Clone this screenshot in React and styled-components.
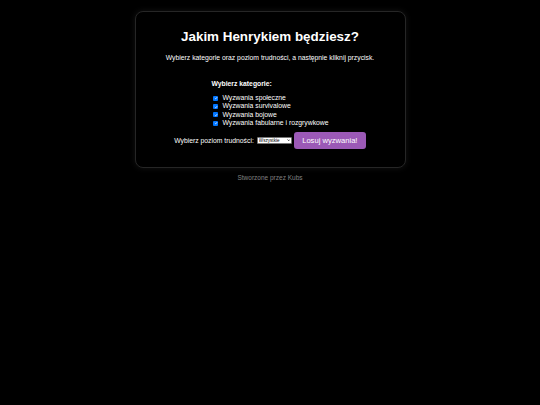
import { useState } from "react";
import styled, { createGlobalStyle } from "styled-components";

const GlobalStyle = createGlobalStyle`
  html, body {
    margin: 0;
    padding: 0;
    background: #000;
  }
  body {
    font-family: "Liberation Sans", Arial, sans-serif;
    color: #fff;
  }
`;

const Page = styled.div`
  display: flex;
  flex-direction: column;
  align-items: center;
  padding-top: 11px;
`;

const Panel = styled.div`
  box-sizing: border-box;
  width: 271px;
  padding: 16px 10px 18px;
  background: #000;
  border: 1px solid #262626;
  border-radius: 8px;
  box-shadow: 0 0 6px rgba(255, 255, 255, 0.08);
  text-align: center;
`;

const Title = styled.h1`
  margin: 0;
  font-size: 13.4px;
  line-height: 17px;
  font-weight: 700;
`;

const Intro = styled.p`
  margin: 8px 0 0;
  font-size: 6.8px;
  line-height: 9px;
`;

const Categories = styled.div`
  display: inline-block;
  margin-top: 17px;
  text-align: left;
`;

const SectionTitle = styled.h3`
  margin: 0 0 6px;
  font-size: 6.8px;
  line-height: 9px;
  font-weight: 700;
`;

const CheckRow = styled.label`
  display: flex;
  align-items: center;
  gap: 4px;
  height: 8.4px;
  padding-left: 2px;
  font-size: 6.8px;
  line-height: 8.4px;
  cursor: pointer;
`;

const HiddenInput = styled.input`
  position: absolute;
  opacity: 0;
  width: 0;
  height: 0;
  margin: 0;
`;

const Box = styled.span`
  display: flex;
  align-items: center;
  justify-content: center;
  flex: none;
  box-sizing: border-box;
  width: 5px;
  height: 5px;
  border-radius: 1px;
  background: ${(p) => (p.$on ? "#0075ff" : "#fff")};
  border: ${(p) => (p.$on ? "none" : "0.5px solid #767676")};

  svg {
    width: 4px;
    height: 4px;
  }
`;

const ControlRow = styled.div`
  display: flex;
  justify-content: center;
  align-items: center;
  gap: 2px;
  margin-top: 2.2px;
  font-size: 6.8px;
`;

const SelectWrap = styled.span`
  position: relative;
  display: inline-flex;
  margin-left: 1px;

  svg {
    position: absolute;
    right: 1.5px;
    top: 50%;
    width: 3.5px;
    height: 3.5px;
    transform: translateY(-50%);
    pointer-events: none;
  }
`;

const Select = styled.select`
  appearance: none;
  box-sizing: border-box;
  width: 35px;
  height: 7px;
  padding: 0 5px 0 1px;
  margin: 0;
  font-size: 4.6px;
  line-height: 5px;
  font-family: "Liberation Sans", Arial, sans-serif;
  color: #000;
  background: #fff;
  border: 0.5px solid #767676;
  border-radius: 1px;
  outline: none;
`;

const DrawButton = styled.button`
  width: 72px;
  height: 17.4px;
  padding: 0;
  border: none;
  border-radius: 3px;
  background: #9b59b6;
  color: #fff;
  font-family: "Liberation Sans", Arial, sans-serif;
  font-size: 7.6px;
  cursor: pointer;
`;

const Footer = styled.footer`
  margin-top: 6px;
  font-size: 6.5px;
  line-height: 8px;
  color: #808080;
`;

const categories = [
  "Wyzwania społeczne",
  "Wyzwania survivalowe",
  "Wyzwania bojowe",
  "Wyzwania fabularne i rozgrywkowe",
];

export default function App() {
  const [checked, setChecked] = useState(categories.map(() => true));
  const [level, setLevel] = useState("all");

  const toggle = (i) => {
    setChecked(checked.map((c, idx) => (idx === i ? !c : c)));
  };

  return (
    <>
      <GlobalStyle />
      <Page>
        <Panel>
          <Title>Jakim Henrykiem będziesz?</Title>
          <Intro>
            Wybierz kategorie oraz poziom trudności, a następnie kliknij przycisk.
          </Intro>
          <Categories>
            <SectionTitle>Wybierz kategorie:</SectionTitle>
            {categories.map((name, i) => (
              <CheckRow key={name}>
                <HiddenInput type='checkbox' checked={checked[i]} onChange={() => toggle(i)} />
                <Box $on={checked[i]}>
                  {checked[i] && (
                    <svg viewBox='0 0 10 10'>
                      <path d='M2 5.2 L4.2 7.3 L8 2.8' fill='none' stroke='#fff' strokeWidth='1.8' />
                    </svg>
                  )}
                </Box>
                {name}
              </CheckRow>
            ))}
          </Categories>
          <ControlRow>
            <span>Wybierz poziom trudności:</span>
            <SelectWrap>
              <Select value={level} onChange={(e) => setLevel(e.target.value)}>
                <option value='all'>Wszystkie</option>
                <option value='easy'>Łatwe</option>
                <option value='medium'>Średnie</option>
                <option value='hard'>Trudne</option>
              </Select>
              <svg viewBox='0 0 10 10'>
                <path d='M1.5 3.5 L5 7 L8.5 3.5' fill='none' stroke='#000' strokeWidth='2' />
              </svg>
            </SelectWrap>
            <DrawButton>Losuj wyzwania!</DrawButton>
          </ControlRow>
        </Panel>
        <Footer>Stworzone przez Kubs</Footer>
      </Page>
    </>
  );
}
